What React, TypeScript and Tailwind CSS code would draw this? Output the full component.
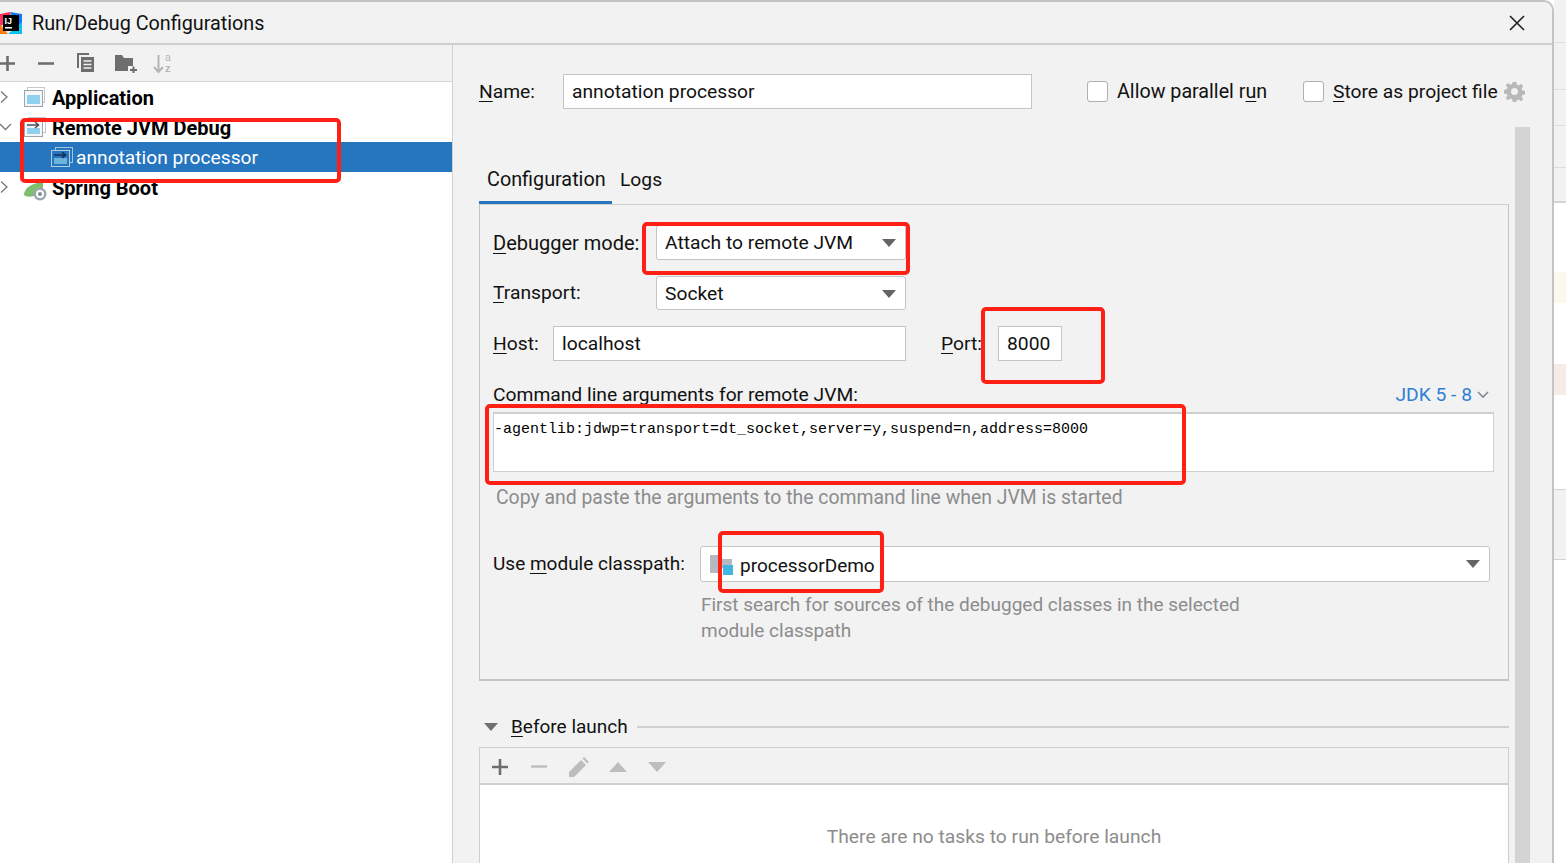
import React from "react";

const U = ({ children }: { children: React.ReactNode }) => (
  <span className="underline decoration-1 underline-offset-[3px]">{children}</span>
);

const Logo = () => (
  <svg width="22" height="22" viewBox="0 0 22 22" className="shrink-0">
    <polygon points="0,2 10,0 12,10 0,14" fill="#fe315d" />
    <polygon points="0,12 8,22 0,22" fill="#f97a12" />
    <polygon points="10,0 22,2 22,14 14,10" fill="#087cfa" />
    <polygon points="8,22 22,22 22,10" fill="#07c3f2" />
    <rect x="3" y="3" width="16" height="16" fill="#000" />
    <rect x="5" y="15" width="7" height="1.5" fill="#fff" />
    <text x="4.5" y="12" fontSize="9" fontWeight="700" fill="#fff" fontFamily="Liberation Sans, sans-serif">IJ</text>
  </svg>
);

const AppIcon = () => (
  <svg width="22" height="20" viewBox="0 0 22 20" className="shrink-0">
    <rect x="3.5" y="0.5" width="17" height="15" fill="none" stroke="#c4c8cc" />
    <rect x="0.5" y="3.5" width="18" height="16" fill="#f4f6f7" stroke="#9aa7b0" />
    <rect x="3" y="8" width="13" height="9" fill="#8ed1ee" />
  </svg>
);

const RemoteIcon = ({ dark = false }: { dark?: boolean }) => (
  <svg width="22" height="20" viewBox="0 0 22 20" className="shrink-0">
    <rect x="4.5" y="0.5" width="17" height="15" fill="none" stroke={dark ? "#a8c4dc" : "#c4c8cc"} />
    <rect x="0.5" y="3.5" width="18" height="16" fill={dark ? "#2675bf" : "#f4f6f7"} stroke={dark ? "#b5cde0" : "#9aa7b0"} />
    <rect x="3" y="11" width="13" height="6" fill={dark ? "#6cb4dc" : "#8ed1ee"} />
    <path d="M3 8h11M11 5l3.5 3-3.5 3" fill="none" stroke={dark ? "#10304f" : "#4a5257"} strokeWidth="1.5" />
  </svg>
);

const SpringIcon = () => (
  <svg width="23" height="19" viewBox="0 0 23 19" className="shrink-0 mt-[8px]">
    <path d="M0 13C0 6 8 1 19 0c1 8-3 13-9 14-4 1-8 1-10-1z" fill="#7ebf6e" />
    <circle cx="16" cy="12" r="6.5" fill="#9aa7b0" />
    <circle cx="16" cy="12" r="4" fill="#fff" />
    <circle cx="16" cy="12" r="2" fill="#7f8b91" />
  </svg>
);

const Chevron = ({ down = false }: { down?: boolean }) => (
  <svg width="12" height="14" viewBox="0 0 12 14" className="shrink-0">
    {down ? (
      <path d="M0 4l5.5 5.5L11 4" fill="none" stroke="#777" strokeWidth="1.3" />
    ) : (
      <path d="M1 1.5L7 7l-6 5.5" fill="none" stroke="#777" strokeWidth="1.3" />
    )}
  </svg>
);

const Caret = () => (
  <svg width="14" height="8" viewBox="0 0 14 8" className="shrink-0">
    <path d="M0 0h14L7 8z" fill="#646464" />
  </svg>
);

const Combo = ({ text, className }: { text: string; className: string }) => (
  <div className={`flex items-center justify-between bg-white border border-[#c4c4c4] rounded-[3px] pl-2 pr-[9px] ${className}`}>
    <span>{text}</span>
    <Caret />
  </div>
);

const Check = () => (
  <span className="w-[21px] h-[21px] bg-white border border-[#b0b0b0] rounded-[3px] shrink-0" />
);

const Rect = ({ className }: { className: string }) => (
  <div className={`absolute border-[4px] border-[#fe2015] rounded-[5px] pointer-events-none ${className}`} />
);

const TreeRow = ({ icon, label, chevron, bold = true, selected = false }: { icon: React.ReactNode; label: string; chevron?: React.ReactNode; bold?: boolean; selected?: boolean }) => (
  <div className={`h-[30px] flex items-center ${selected ? "bg-[#2675bf] text-white pl-[51px]" : "text-black"}`}>
    {chevron && <span className="w-[24px] flex items-center">{chevron}</span>}
    <span className="w-[28px] shrink-0 flex items-center">{icon}</span>
    <span className={bold ? "font-bold text-[20px] pt-[1px]" : "-ml-[3px] pt-[2px] text-[19.2px]"}>{label}</span>
  </div>
);

export default function App() {
  return (
    <div className="relative w-[1566px] h-[863px] overflow-hidden flex bg-white text-[19.25px] leading-[26px] text-[#111]" style={{ fontFamily: 'Roboto, "Noto Sans", sans-serif' }}>
      <div className="w-[1554px] h-full flex flex-col bg-[#f2f2f2] border-t-2 border-r-2 border-[#c4c4c4] rounded-tr-[10px]">
        <div className="h-[43px] shrink-0 flex items-center border-b-2 border-[#cfcfcf]">
          <Logo />
          <span className="ml-[10px] pt-[2px] text-[19.8px]">Run/Debug Configurations</span>
          <svg width="16" height="16" viewBox="0 0 16 16" className="ml-auto mr-[27px]">
            <path d="M1 1l14 14M15 1L1 15" stroke="#222" strokeWidth="1.6" fill="none" />
          </svg>
        </div>
        <div className="flex-1 flex min-h-0">
          <div className="w-[453px] shrink-0 flex flex-col border-r border-[#d0d0d0]">
            <div className="h-[37px] shrink-0 flex items-center border-b border-[#d4d4d4] relative">
              <svg width="15" height="15" viewBox="0 0 15 15"><path d="M0 7.5h15M7.5 0v15" stroke="#6e6e6e" strokeWidth="2.6" /></svg>
              <svg width="16" height="3" viewBox="0 0 16 3" className="ml-[23px]"><path d="M0 1.5h16" stroke="#6e6e6e" strokeWidth="2.6" /></svg>
              <svg width="19" height="20" viewBox="0 0 19 20" className="ml-[22px]"><path d="M13 1H2v14" fill="none" stroke="#6e6e6e" strokeWidth="2" /><rect x="5" y="4" width="13" height="15" fill="#6e6e6e" /><path d="M7.5 8h8M7.5 11.5h8M7.5 15h8" stroke="#f2f2f2" strokeWidth="1.4" /></svg>
              <svg width="22" height="20" viewBox="0 0 22 20" className="ml-[20px]"><path d="M0 2h7l2 3h9v8h-5v5H0z" fill="#6e6e6e" /><path d="M15 17h7M18.5 13.5v6.5" stroke="#6e6e6e" strokeWidth="2" /></svg>
              <svg width="21" height="24" viewBox="0 0 21 24" className="ml-[16px]">
                <path d="M5.5 4v17M1 16l4.500 5 4.500-5" fill="none" stroke="#b5b5b5" strokeWidth="2" />
                <text x="12" y="10" fontSize="10.5" fill="#b5b5b5" fontFamily="Liberation Sans, sans-serif">a</text>
                <text x="12" y="21" fontSize="11" fontWeight="700" fill="#b5b5b5" fontFamily="Liberation Sans, sans-serif">z</text>
              </svg>
            </div>
            <div className="flex-1 bg-white flex flex-col">
              <TreeRow chevron={<Chevron />} icon={<AppIcon />} label="Application" />
              <TreeRow chevron={<Chevron down />} icon={<RemoteIcon />} label="Remote JVM Debug" />
              <TreeRow selected bold={false} icon={<RemoteIcon dark />} label="annotation processor" />
              <TreeRow chevron={<Chevron />} icon={<SpringIcon />} label="Spring Boot" />
            </div>
          </div>
          <div className="flex-1 min-w-0 flex flex-col pl-[26px]">
            <div className="flex items-center h-[35px] mt-[29px] shrink-0">
              <span className="w-[84px]"><U>N</U>ame:</span>
              <div className="w-[469px] h-[35px] bg-white border border-[#c4c4c4] flex items-center pl-2">annotation processor</div>
              <span className="ml-[55px] flex items-center"><Check /><span className="ml-[9px] w-[151px] whitespace-nowrap text-[19.7px]">Allow parallel r<U>u</U>n</span></span>
              <span className="ml-[35px] flex items-center"><Check /><span className="ml-[9px] w-[165px] whitespace-nowrap"><U>S</U>tore as project file</span></span>
              <svg width="21" height="21" viewBox="0 0 24 24" className="ml-[6px]"><path fill="#b8b8b8" d="M10 1h4l.7 3.200 2 .9L19.500 3 22 6l-2 2.600.8 2 3.200.7v4l-3.200.7-.8 2 2 2.600-2.500 2.500-2.800-2-2 .8L14 24h-4l-.7-3.200-2-.8-2.800 2L2 19.500l2-2.600-.8-2L0 14.200v-4l3.200-.7.8-2-2-2.600L4.500 2.400l2.800 2 2-.9z" /><circle cx="12" cy="12" r="4" fill="#f2f2f2" /></svg>
            </div>
            <div className="flex-1 min-h-0 mt-[18px] flex gap-[6px] overflow-hidden">
              <div className="w-[1030px] shrink-0 flex flex-col">
                <div className="h-[77px] shrink-0 flex items-end">
                  <span className="h-[46px] w-[133px] pl-2 pt-[9px] border-b-[3px] border-[#2675bf] shrink-0 text-[19.8px]">Configuration</span>
                  <span className="h-[46px] pl-2 pt-[9px]">Logs</span>
                </div>
                <div className="h-[477px] shrink-0 border border-b-2 border-[#c4c4c4] border-t-[#cfcfcf] pl-[13px] pr-[14px] flex flex-col">
                  <div className="flex items-center mt-[20px] h-[35px]">
                    <span className="w-[163px] text-[20px] whitespace-nowrap"><U>D</U>ebugger mode:</span>
                    <Combo text="Attach to remote JVM" className="w-[250px] h-[35px]" />
                  </div>
                  <div className="flex items-center mt-[16px] h-[34px]">
                    <span className="w-[163px]"><U>T</U>ransport:</span>
                    <Combo text="Socket" className="w-[250px] h-[34px] pt-[2px]" />
                  </div>
                  <div className="flex items-center mt-[16px] h-[35px]">
                    <span className="w-[60px]"><U>H</U>ost:</span>
                    <div className="w-[353px] h-[35px] bg-white border border-[#c4c4c4] flex items-center pl-2">localhost</div>
                    <span className="ml-[35px] w-[57px]"><U>P</U>ort:</span>
                    <div className="w-[64px] h-[35px] bg-white border border-[#c4c4c4] flex items-center pl-2">8000</div>
                  </div>
                  <div className="flex items-center justify-between mt-[20px] h-[26px] pr-[5px]">
                    <span className="pt-[1px]"><U>C</U>ommand line arguments for remote JVM:</span>
                    <span className="flex items-center text-[#2f7fd6] pt-[1px]">JDK 5 - 8<svg width="12" height="8" viewBox="0 0 12 8" className="ml-[5px]"><path d="M1 1l5 5 5-5" fill="none" stroke="#7f8b91" strokeWidth="1.6" /></svg></span>
                  </div>
                  <div className="h-[60px] w-[1001px] mt-[5px] bg-white border border-t-2 border-[#cfcfcf] pt-[6px] text-[15px] leading-[20px] text-black" style={{ fontFamily: '"Liberation Mono", monospace' }}>
                    -agentlib:jdwp=transport=dt_socket,server=y,suspend=n,address=8000
                  </div>
                  <div className="mt-[13px] ml-[3px] text-[#8c8c8c] text-[19.4px]">Copy and paste the arguments to the command line when JVM is started</div>
                  <div className="flex items-center mt-[35px] h-[36px]">
                    <span className="w-[207px] text-[19px]">Use <U>m</U>odule classpath:</span>
                    <div className="w-[790px] h-[36px] bg-white border border-[#c4c4c4] rounded-[3px] flex items-center pl-[9px] pr-[9px]">
                      <svg width="24" height="21" viewBox="0 0 24 21" className="shrink-0"><path d="M0 1h12v4h10v9H12v5H0z" fill="#b4bac0" /><rect x="13" y="11" width="10" height="10" fill="#40b6e0" /></svg>
                      <span className="ml-[6px] pt-[4px] text-[19px]">processorDemo</span>
                      <span className="ml-auto"><Caret /></span>
                    </div>
                  </div>
                  <div className="mt-[10px] ml-[208px] text-[#8c8c8c] text-[19px]">First search for sources of the debugged classes in the selected<br />module classpath</div>
                </div>
                <div className="flex items-center h-[26px] mt-[33px] shrink-0">
                  <svg width="14" height="8" viewBox="0 0 14 8" className="ml-[5px]"><path d="M0 0h14L7 8z" fill="#707070" /></svg>
                  <span className="ml-[13px] text-[19px]"><U>B</U>efore launch</span>
                  <span className="flex-1 h-[2px] ml-[9px] bg-[#d0d0d0]" />
                </div>
                <div className="flex-1 mt-[7px] flex flex-col border border-[#cfcfcf] border-b-0 min-h-[116px]">
                  <div className="h-[37px] shrink-0 flex items-center border-b-2 border-[#d0d0d0] pl-[12px]">
                    <svg width="16" height="16" viewBox="0 0 16 16" className="mt-[2px]"><path d="M0 8h16M8 0v16" stroke="#6e6e6e" strokeWidth="2.600" /></svg>
                    <svg width="16" height="3" viewBox="0 0 16 3" className="ml-[23px] mt-[2px]"><path d="M0 1.500h16" stroke="#bdbdbd" strokeWidth="2.400" /></svg>
                    <svg width="20" height="20" viewBox="0 0 20 20" className="ml-[22px] mt-[2px]"><path d="M0 20v-5L12 3l5 5L5 20zM13.500 1.500L15 0l5 5-1.500 1.500z" fill="#bdbdbd" /></svg>
                    <svg width="18" height="10" viewBox="0 0 18 10" className="ml-[20px] mt-[2px]"><path d="M0 10L9 0l9 10z" fill="#bdbdbd" /></svg>
                    <svg width="18" height="10" viewBox="0 0 18 10" className="ml-[21px] mt-[2px]"><path d="M0 0l9 10 9-10z" fill="#bdbdbd" /></svg>
                  </div>
                  <div className="flex-1 bg-white flex justify-center pt-[39px] text-[#8c8c8c] text-[19.25px]">There are no tasks to run before launch</div>
                </div>
              </div>
              <div className="w-[15px] shrink-0 bg-[#d4d4d4]" />
            </div>
          </div>
        </div>
      </div>
      <div className="flex-1 flex flex-col">
        <div className="h-[43px] border-b border-[#dedede] bg-[#f2f2f2]" />
        <div className="h-[47px] border-b border-[#dedede] bg-[#f2f2f2]" />
        <div className="h-[36px] border-b border-[#dedede] bg-[#f2f2f2]" />
        <div className="h-[42px] border-b border-[#dedede] bg-[#f2f2f2]" />
        <div className="h-[35px] border-b-2 border-[#d4d4d4] bg-[#f2f2f2]" />
        <div className="h-[69px]" />
        <div className="h-[31px] bg-[#fbf9ee]" />
        <div className="h-[61px]" />
        <div className="h-[31px] bg-[#f7ebe8]" />
        <div className="h-[94px]" />
        <div className="h-[71px] bg-[#f2f2f2] border-y border-[#d4d4d4]" />
      </div>
      <Rect className="left-[20px] top-[118px] w-[321px] h-[65px]" />
      <Rect className="left-[642px] top-[222px] w-[268px] h-[53px]" />
      <Rect className="left-[981px] top-[307px] w-[124px] h-[77px]" />
      <Rect className="left-[485px] top-[404px] w-[701px] h-[81px]" />
      <Rect className="left-[718px] top-[531px] w-[166px] h-[62px]" />
    </div>
  );
}
